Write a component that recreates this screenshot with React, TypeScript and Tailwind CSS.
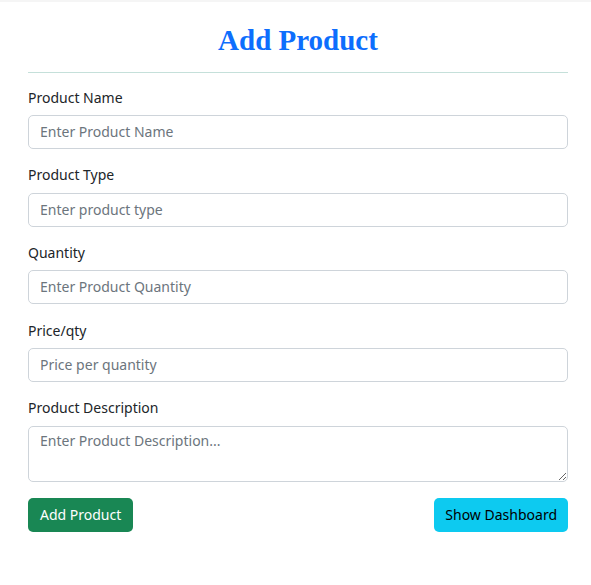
export default function App() {
  const fields = [
    { label: "Product Name", placeholder: "Enter Product Name" },
    { label: "Product Type", placeholder: "Enter product type" },
    { label: "Quantity", placeholder: "Enter Product Quantity" },
    { label: "Price/qty", placeholder: "Price per quantity" },
  ]

  return (
    <div className="min-h-screen bg-white border-t-2 border-[#f5f5f5] font-['Noto_Sans',sans-serif] text-[#212529]">
      <div className="w-[540px] ml-[28px]">
        {/* Heading */}
        <h2 className="pt-[19px] text-center font-['Liberation_Serif',serif] text-[29px] leading-[38px] font-bold text-[#0d6efd]">
          Add Product
        </h2>
        <hr className="mt-[13px] mb-[11px] border-0 border-t border-[#c5e0da]" />

        {fields.map((f) => (
          <div key={f.label} className="mb-[12.7px]">
            <label className="block pt-[1.5px] text-[14px] leading-6 mb-[5.5px]">{f.label}</label>
            <input
              className="w-full h-[34px] px-[11px] pb-px rounded-[5px] border border-[#ced4da] text-[14px] placeholder:text-[#6c757d] outline-none"
              placeholder={f.placeholder}
            />
          </div>
        ))}

        <div className="mb-[16px]">
          <label className="block pt-[1.5px] text-[14px] leading-6 mb-[5.5px]">Product Description</label>
          <textarea
            className="block w-full h-[56px] px-[11px] py-[3px] rounded-[5px] border border-[#ced4da] text-[14px] placeholder:text-[#6c757d] outline-none"
            placeholder="Enter Product Description..."
          />
        </div>

        <div className="flex justify-between">
          <button className="h-[34px] px-[12px] rounded-[5px] bg-[#198754] text-white text-[14px]">
            Add Product
          </button>
          <button className="h-[34px] px-[11px] rounded-[5px] bg-[#0dcaf0] text-black text-[14px]">
            Show Dashboard
          </button>
        </div>
      </div>
    </div>
  )
}
